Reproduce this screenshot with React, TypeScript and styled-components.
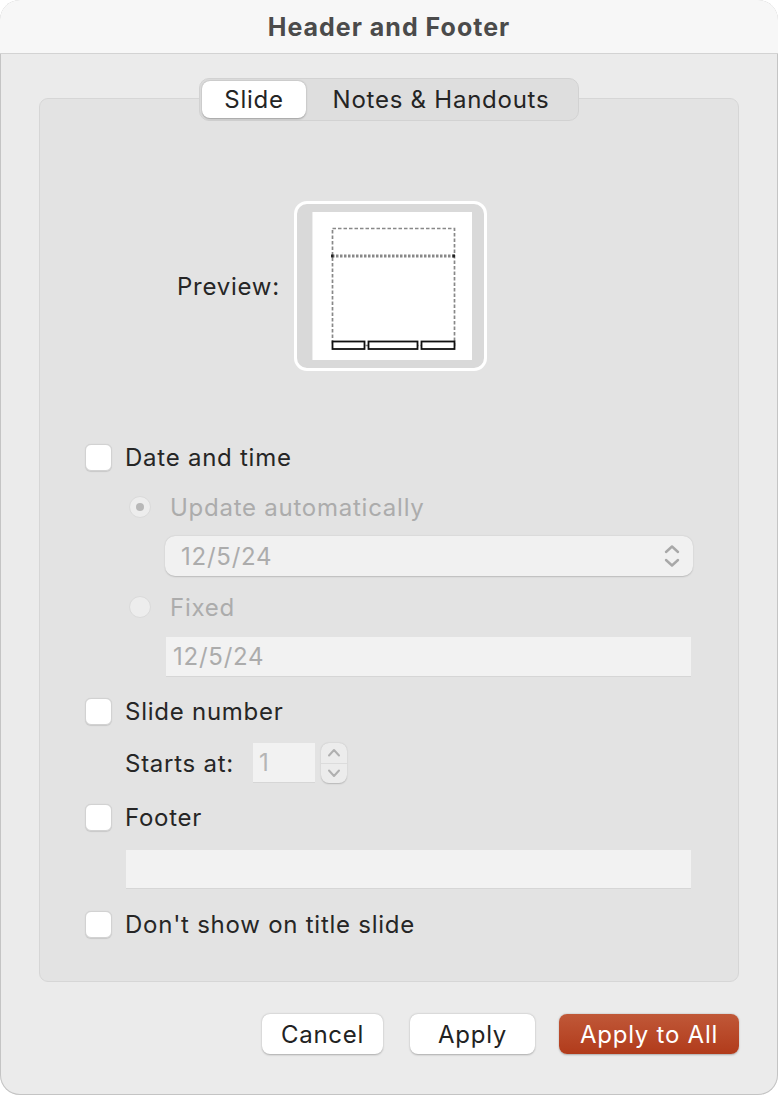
import React from "react";
import styled, { createGlobalStyle } from "styled-components";

const GlobalStyle = createGlobalStyle`
  html, body {
    margin: 0;
    padding: 0;
    background: #ffffff;
  }
  body {
    font-family: Inter, "Liberation Sans", Arial, sans-serif;
    letter-spacing: 0.75px;
    -webkit-font-smoothing: antialiased;
  }
`;

// --- window frame ---

const Window = styled.div`
  width: 778px;
  height: 1095px;
  box-sizing: border-box;
  display: flex;
  flex-direction: column;
  background: #ebebeb;
  border-radius: 20px;
  box-shadow: inset 0 0 0 1px #c4c4c4;
  overflow: hidden;
`;

const TitleBar = styled.div`
  height: 54px;
  flex-shrink: 0;
  box-sizing: border-box;
  display: flex;
  align-items: center;
  justify-content: center;
  background: #f7f7f7;
  border-bottom: 1px solid #d3d3d3;
  font-size: 25px;
  font-weight: 700;
  color: #4b4b4b;
  letter-spacing: 1px;
  padding-top: 1px;
`;

const Body = styled.div`
  flex: 1;
  display: flex;
  flex-direction: column;
  align-items: center;
  padding: 24px 39px 0 39px;
`;

// --- tabs ---

const Segmented = styled.div`
  position: relative;
  z-index: 1;
  display: flex;
  height: 43px;
  box-sizing: border-box;
  padding: 2px;
  border-radius: 10px;
  background: #dedede;
  border: 1px solid #d2d2d2;
`;

const Segment = styled.div<{ $active?: boolean }>`
  display: flex;
  align-items: center;
  justify-content: center;
  width: ${(p) => (p.$active ? "104px" : "270px")};
  border-radius: 8px;
  font-size: 24px;
  color: #242424;
  background: ${(p) => (p.$active ? "#ffffff" : "transparent")};
  box-shadow: ${(p) =>
    p.$active ? "0 0.5px 2px rgba(0,0,0,0.3)" : "none"};
`;

const GroupBox = styled.div`
  align-self: stretch;
  margin-top: -23px;
  height: 884px;
  box-sizing: border-box;
  background: #e3e3e3;
  border: 1px solid #d6d6d6;
  border-radius: 9px;
  display: flex;
  flex-direction: column;
  padding: 102px 0 0 45px;
`;

// --- preview ---

const PreviewRow = styled.div`
  display: flex;
  align-items: center;
  gap: 14px;
  margin-left: 92px;
`;

const PreviewLabel = styled.span`
  font-size: 24px;
  color: #262626;
`;

const PreviewFrame = styled.div`
  width: 193px;
  height: 170px;
  box-sizing: border-box;
  border: 3px solid #ffffff;
  border-radius: 13px;
  background: #d9d9d9;
  display: flex;
  align-items: flex-start;
  padding: 8px 0 0 16px;
`;

const Page = styled.div`
  width: 159px;
  height: 148px;
  background: #ffffff;
  box-shadow: -1px 0 0 #eeeeee;
  display: flex;
`;

// --- options ---

const Row = styled.div<{ $gap: number; $indent?: number }>`
  display: flex;
  align-items: center;
  height: 40px;
  margin-top: ${(p) => p.$gap}px;
  margin-left: ${(p) => p.$indent ?? 0}px;
`;

const CheckBox = styled.span`
  width: 27px;
  height: 27px;
  box-sizing: border-box;
  border-radius: 6px;
  background: #ffffff;
  border: 1px solid #d2d2d2;
  box-shadow: 0 0.5px 1px rgba(0, 0, 0, 0.12);
  margin-right: 13px;
`;

const Radio = styled.span<{ $checked?: boolean }>`
  width: 22px;
  height: 22px;
  box-sizing: border-box;
  border-radius: 50%;
  background: #ededed;
  border: 1px solid #dadada;
  margin-right: 19px;
  display: flex;
  align-items: center;
  justify-content: center;

  &::after {
    content: "";
    width: 8px;
    height: 8px;
    border-radius: 50%;
    background: ${(p) => (p.$checked ? "#b8b8b8" : "transparent")};
  }
`;

const Label = styled.span<{ $disabled?: boolean }>`
  font-size: 24px;
  color: ${(p) => (p.$disabled ? "#acacac" : "#262626")};
  white-space: nowrap;
`;

const Select = styled.div`
  display: flex;
  align-items: center;
  justify-content: space-between;
  width: 528px;
  height: 40px;
  box-sizing: border-box;
  margin: 9px 0 0 80px;
  padding: 0 12px 0 16px;
  border-radius: 10px;
  background: #f1f1f1;
  box-shadow: 0 0.5px 1.5px rgba(0, 0, 0, 0.18);
  font-size: 24px;
  color: #acacac;
`;

const TextField = styled.div<{ $gap: number; $indent: number; $width: number; $height: number }>`
  display: flex;
  align-items: center;
  width: ${(p) => p.$width}px;
  height: ${(p) => p.$height}px;
  box-sizing: border-box;
  margin: ${(p) => p.$gap}px 0 0 ${(p) => p.$indent}px;
  padding-left: 7px;
  background: #f2f2f2;
  border-bottom: 1px solid #d6d6d6;
  font-size: 24px;
  color: #acacac;
`;

const StartsLabel = styled(Label)`
  margin-left: 40px;
  margin-right: 19px;
`;

const NumberField = styled.div`
  width: 62px;
  height: 40px;
  box-sizing: border-box;
  padding-left: 6px;
  display: flex;
  align-items: center;
  background: #f2f2f2;
  border-bottom: 1px solid #d6d6d6;
  font-size: 24px;
  color: #b5b5b5;
`;

const Stepper = styled.div`
  width: 26px;
  height: 40px;
  margin-left: 6px;
  box-sizing: border-box;
  border-radius: 8px;
  background: #ececec;
  box-shadow: 0 0.5px 1.5px rgba(0, 0, 0, 0.2);
  display: flex;
  flex-direction: column;
`;

const StepHalf = styled.div<{ $top?: boolean }>`
  flex: 1;
  display: flex;
  align-items: center;
  justify-content: center;
  border-bottom: ${(p) => (p.$top ? "1px solid #dcdcdc" : "none")};
`;

// --- footer buttons ---

const ButtonBar = styled.div`
  align-self: stretch;
  display: flex;
  justify-content: flex-end;
  gap: 24px;
  margin-top: 32px;
`;

const Button = styled.button<{ $primary?: boolean; $width: number; $after?: number }>`
  width: ${(p) => p.$width}px;
  height: 40px;
  margin-right: ${(p) => p.$after ?? 0}px;
  border: none;
  border-radius: 8px;
  font-family: inherit;
  letter-spacing: 0.75px;
  font-size: 24px;
  color: ${(p) => (p.$primary ? "#ffffff" : "#222222")};
  background: ${(p) =>
    p.$primary ? "linear-gradient(#c05838, #b13b1b)" : "#ffffff"};
  box-shadow: 0 0.5px 2px rgba(0, 0, 0, 0.28);
  padding: 0;
`;

const Chevrons = () => (
  <svg width="18" height="26" viewBox="0 0 18 26">
    <path
      d="M3 9 L9 3.5 L15 9 M3 17 L9 22.5 L15 17"
      fill="none"
      stroke="#a8a8a8"
      strokeWidth="2.4"
      strokeLinecap="round"
      strokeLinejoin="round"
    />
  </svg>
);

const StepArrow = ({ up }: { up?: boolean }) => (
  <svg width="14" height="9" viewBox="0 0 14 9">
    <path
      d={up ? "M2 7.5 L7 2 L12 7.5" : "M2 1.5 L7 7 L12 1.5"}
      fill="none"
      stroke="#b0b0b0"
      strokeWidth="2"
      strokeLinecap="round"
      strokeLinejoin="round"
    />
  </svg>
);

const SlideLayout = () => (
  <svg width="159" height="148" viewBox="0 0 159 148">
    <rect
      x="19.5"
      y="16.5"
      width="122"
      height="117"
      fill="none"
      stroke="#888888"
      strokeWidth="1.7"
      strokeDasharray="3.5 2"
    />
    <line
      x1="19"
      y1="44"
      x2="142"
      y2="44"
      stroke="#888888"
      strokeWidth="2.8"
      strokeDasharray="2.5 1.5"
    />
    <rect x="18" y="42.5" width="2.5" height="3" fill="#222" />
    <rect x="139.5" y="42.5" width="2.5" height="3" fill="#222" />
    <rect x="19.5" y="129.5" width="32" height="7.5" fill="#fff" stroke="#111" strokeWidth="1.8" />
    <rect x="55.5" y="129.5" width="49" height="7.5" fill="#fff" stroke="#111" strokeWidth="1.8" />
    <rect x="108.5" y="129.5" width="33" height="7.5" fill="#fff" stroke="#111" strokeWidth="1.8" />
  </svg>
);

const App = () => {
  return (
    <>
      <GlobalStyle />
      <Window>
        <TitleBar>Header and Footer</TitleBar>
        <Body>
          <Segmented>
            <Segment $active>Slide</Segment>
            <Segment>Notes &amp; Handouts</Segment>
          </Segmented>

          <GroupBox>
            <PreviewRow>
              <PreviewLabel>Preview:</PreviewLabel>
              <PreviewFrame>
                <Page>
                  <SlideLayout />
                </Page>
              </PreviewFrame>
            </PreviewRow>

            <Row $gap={66}>
              <CheckBox />
              <Label>Date and time</Label>
            </Row>
            <Row $gap={10} $indent={44}>
              <Radio $checked />
              <Label $disabled>Update automatically</Label>
            </Row>
            <Select>
              <span>12/5/24</span>
              <Chevrons />
            </Select>
            <Row $gap={11} $indent={44}>
              <Radio />
              <Label $disabled>Fixed</Label>
            </Row>
            <TextField $gap={10} $indent={81} $width={525} $height={40}>
              12/5/24
            </TextField>

            <Row $gap={14}>
              <CheckBox />
              <Label>Slide number</Label>
            </Row>
            <Row $gap={12}>
              <StartsLabel>Starts at:</StartsLabel>
              <NumberField>1</NumberField>
              <Stepper>
                <StepHalf $top>
                  <StepArrow up />
                </StepHalf>
                <StepHalf>
                  <StepArrow />
                </StepHalf>
              </Stepper>
            </Row>

            <Row $gap={14}>
              <CheckBox />
              <Label>Footer</Label>
            </Row>
            <TextField $gap={13} $indent={41} $width={565} $height={39} />

            <Row $gap={15}>
              <CheckBox />
              <Label>Don't show on title slide</Label>
            </Row>
          </GroupBox>

          <ButtonBar>
            <Button $width={121} $after={3}>Cancel</Button>
            <Button $width={125}>Apply</Button>
            <Button $primary $width={180}>
              Apply to All
            </Button>
          </ButtonBar>
        </Body>
      </Window>
    </>
  );
};

export default App;
